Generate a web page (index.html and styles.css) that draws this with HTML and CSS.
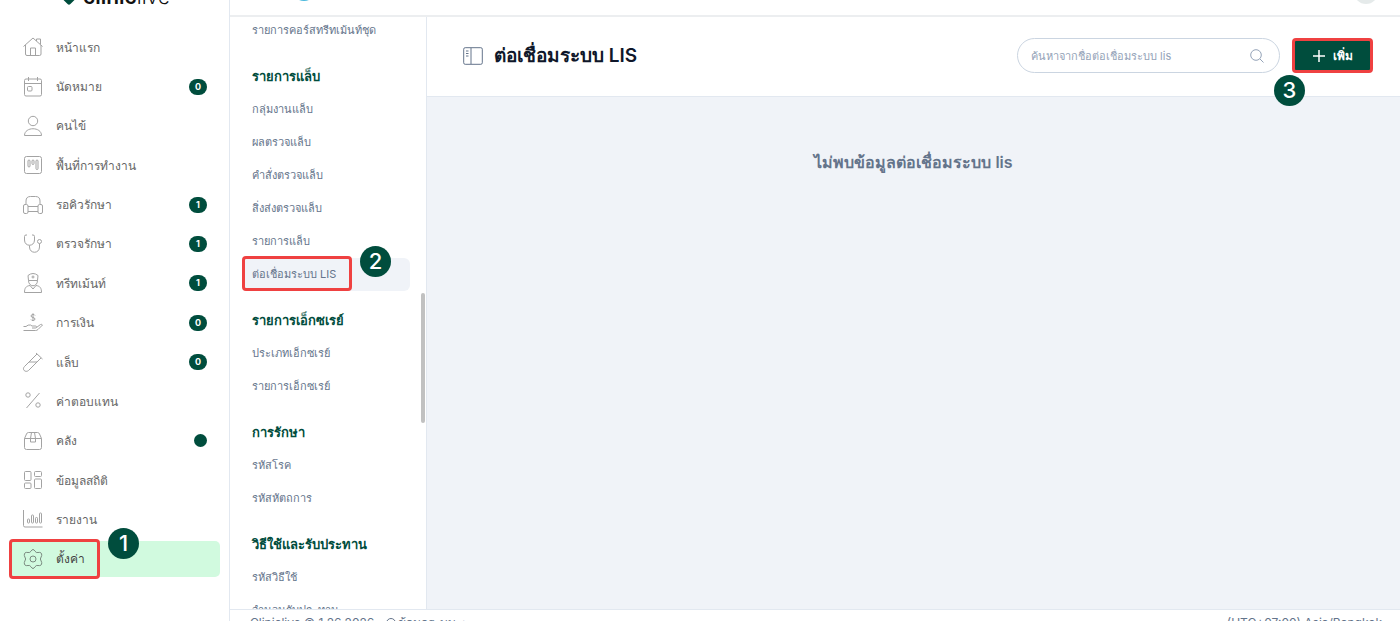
FILE: index.html
```
<!DOCTYPE html>
<html lang="th">
<head>
  <meta charset="UTF-8">
  <meta name="viewport" content="width=device-width, initial-scale=1.0">
  <title>Cliniclive - ต่อเชื่อมระบบ LIS</title>
  <link rel="stylesheet" href="styles.css">
</head>
<body>
  <div class="app">
    <aside class="sidebar">
      <div class="brand">
        <span class="brand-mark"></span>
        <span class="brand-name"><b>clinic</b>live</span>
      </div>
      <nav class="main-nav">
        <a href="#">
          <svg class="icon" viewBox="0 0 20 20"><path d="M.5 9.500 10 1l9.500 8.500M2.500 8v9q0 1.500 1.500 1.500h12.500q1.500 0 1.500-1.500V8M7.500 18.500V11h5v7.500M13.500 4V2h4v5.500"/></svg>
          <span>หน้าแรก</span>
        </a>
        <a href="#">
          <svg class="icon" viewBox="0 0 20 20"><rect x="1.500" y="2" width="17" height="17" rx="1.500"/><path d="M1.500 6.500h17M5.500 0v4M14.500 0v4"/><rect x="4.500" y="9.500" width="4.500" height="4.500" rx="1"/></svg>
          <span>นัดหมาย</span>
          <span class="count">0</span>
        </a>
        <a href="#">
          <svg class="icon" viewBox="0 0 20 20"><circle cx="10" cy="5" r="4.700"/><path d="M1.500 19.500c0-9 17-9 17 0z"/></svg>
          <span>คนไข้</span>
        </a>
        <a href="#">
          <svg class="icon" viewBox="0 0 20 20"><rect x="1.500" y="1.500" width="17" height="17" rx="2"/><rect x="5" y="5" width="2" height="7" rx="1"/><rect x="9" y="5" width="2" height="4.500" rx="1"/><rect x="13" y="5" width="2" height="9.500" rx="1"/></svg>
          <span>พื้นที่การทำงาน</span>
        </a>
        <a href="#">
          <svg class="icon" viewBox="0 0 20 20"><path d="M3 9V6q0-4.500 4.500-4.500h5Q17 1.500 17 6v3M5 11.500h10M5 16.500h10"/><rect x=".5" y="9.500" width="4.500" height="9" rx="1.500"/><rect x="15" y="9.500" width="4.500" height="9" rx="1.500"/></svg>
          <span>รอคิวรักษา</span>
          <span class="count">1</span>
        </a>
        <a href="#">
          <svg class="icon" viewBox="0 0 20 20"><path d="M4 1H3Q1.500 1 1.500 2.500V6c0 7 10 7 10 0V2.500Q11.500 1 10 1H9M6.500 11.500V13c0 7 10 7 10 0V9.500"/><circle cx="16.500" cy="7.500" r="2"/></svg>
          <span>ตรวจรักษา</span>
          <span class="count">1</span>
        </a>
        <a href="#">
          <svg class="icon" viewBox="0 0 20 20"><path d="M5.500 7.500 5 2.500q5-4 10 0l-.5 5zM10 2.500v3M8.500 4h3M5.500 7.500c0 7 9 7 9 0M7 12.500l3 3.500 3-3.500c4 .5 5.500 2.500 5.500 7h-17c0-4.500 1.500-6.500 5.500-7"/></svg>
          <span>ทรีทเม้นท์</span>
          <span class="count">1</span>
        </a>
        <a href="#">
          <svg class="icon" viewBox="0 0 20 20"><path d="M12 2.500C11.500 1 8 1 8 3s4 1 4 3-3.500 2-4 .5M10 .3v7.500M.5 13.500h2.500q2-2 4.500-1.500l1.500 1h3.500q1 0 1 1t-1 1H9M13.500 14.500l4-3q1.500-.5 2 .5L15 16.500q-1 1-2.500 1H.5"/></svg>
          <span>การเงิน</span>
          <span class="count">0</span>
        </a>
        <a href="#">
          <svg class="icon" viewBox="0 0 20 20"><path d="m13 1 6.500 6M14 2 1.500 14.500c-3 3 1 6.500 4 4L18 6M6 10h8"/></svg>
          <span>แล็บ</span>
          <span class="count">0</span>
        </a>
        <a href="#">
          <svg class="icon" viewBox="0 0 20 20"><path d="M16.500 2 3.500 17"/><circle cx="5" cy="4" r="2.200"/><circle cx="15" cy="14" r="2.200"/></svg>
          <span>ค่าตอบแทน</span>
        </a>
        <a href="#">
          <svg class="icon" viewBox="0 0 20 20"><path d="M1.500 7.500 3.500 3q.5-1.500 2-1.500h9q1.500 0 2 1.500l2 4.500v9q0 2-2 2h-13q-2 0-2-2v-9h17M8.500 1.500l-1 6V11h5V7.500l-1-6"/></svg>
          <span>คลัง</span>
          <span class="dot"></span>
        </a>
        <a href="#">
          <svg class="icon" viewBox="0 0 20 20"><rect x="1.500" y="1.500" width="6.500" height="9" rx="1"/><rect x="11.500" y="1.500" width="7" height="5" rx="1"/><rect x="1.500" y="13" width="6.500" height="5.500" rx="1"/><rect x="11.500" y="9" width="7" height="9.500" rx="1"/></svg>
          <span>ข้อมูลสถิติ</span>
        </a>
        <a href="#">
          <svg class="icon" viewBox="0 0 20 20"><path d="M.5 1v15.500q0 1.500 1.500 1.500h17.500"/><rect x="4.500" y="10" width="2" height="4" rx=".8"/><rect x="8.500" y="6" width="2" height="8" rx=".8"/><rect x="12.500" y="8.500" width="2" height="5.500" rx=".8"/><rect x="16.500" y="4" width="2" height="10" rx=".8"/></svg>
          <span>รายงาน</span>
        </a>
        <a href="#" class="active" aria-current="page">
          <svg class="icon" viewBox="0 0 20 20"><path d="M8 2.200Q10-1.200 12 2.200q1 1.800 3 1.300 4-.8 3.700 3Q16 10 18.700 13.500q.3 3.800-3.700 3-2-.5-3 1.300-2 3.400-4 0-1-1.800-3-1.300-4 .8-3.700-3Q4 10 1.300 6.500 1 2.700 5 3.500q2 .5 3-1.300z"/><circle cx="10" cy="10" r="3"/></svg>
          <span>ตั้งค่า</span>
          <span class="outline"></span>
          <span class="step step-nav">1</span>
        </a>
      </nav>
    </aside>

    <div class="page">
      <header class="topbar">
        <span class="clinic-logo"></span>
        <span class="avatar"></span>
      </header>

      <div class="workspace">
        <nav class="sub-nav">
          <section>
            <a href="#">รายการคอร์สทรีทเม้นท์ชุด</a>
          </section>
          <section>
            <h2>รายการแล็บ</h2>
            <a href="#">กลุ่มงานแล็บ</a>
            <a href="#">ผลตรวจแล็บ</a>
            <a href="#">คำสั่งตรวจแล็บ</a>
            <a href="#">สิ่งส่งตรวจแล็บ</a>
            <a href="#">รายการแล็บ</a>
            <a href="#" class="active" aria-current="page">ต่อเชื่อมระบบ LIS
              <span class="outline"></span>
              <span class="step step-sub">2</span>
            </a>
          </section>
          <section>
            <h2>รายการเอ็กซเรย์</h2>
            <a href="#">ประเภทเอ็กซเรย์</a>
            <a href="#">รายการเอ็กซเรย์</a>
          </section>
          <section>
            <h2>การรักษา</h2>
            <a href="#">รหัสโรค</a>
            <a href="#">รหัสหัตถการ</a>
          </section>
          <section>
            <h2>วิธีใช้และรับประทาน</h2>
            <a href="#">รหัสวิธีใช้</a>
            <a href="#">จำนวนรับประทาน</a>
          </section>
          <span class="scroll-thumb"></span>
        </nav>

        <main class="content">
          <div class="content-head">
            <svg class="panel-icon" viewBox="0 0 20 18"><rect x=".7" y=".7" width="18.600" height="16.600" rx="1.500"/><path d="M8 1v16M3 4h2.500M3 6.500h2.500M3 9h2.500"/></svg>
            <h1>ต่อเชื่อมระบบ LIS</h1>
            <form class="search">
              <input type="text" aria-label="ค้นหา" placeholder="ค้นหาจากชื่อต่อเชื่อมระบบ lis">
              <svg class="search-icon" viewBox="0 0 14 14"><circle cx="6" cy="6" r="5.300"/><path d="m10 10 3.500 3.500"/></svg>
            </form>
            <button type="button" class="add">
              <svg class="plus-icon" viewBox="0 0 12 12"><path d="M6 0v12M0 6h12"/></svg>
              <span>เพิ่ม</span>
              <span class="step step-add">3</span>
            </button>
          </div>
          <p class="empty">ไม่พบข้อมูลต่อเชื่อมระบบ lis</p>
        </main>
      </div>

      <footer class="footer">
        <span>Cliniclive © 1.26.2026</span>
        <a href="#"><span class="ring"></span>ข้อมูลระบบ +</a>
        <span class="timezone">(UTC+07:00) Asia/Bangkok</span>
      </footer>
    </div>
  </div>
</body>
</html>
```
FILE: styles.css
```
* {
  box-sizing: border-box;
}

body {
  margin: 0;
  font-family: Inter, "Noto Sans", sans-serif;
  font-size: 12px;
  color: #64748b;
  background-color: #fff;
}

a {
  color: inherit;
  text-decoration: none;
}

.app {
  display: flex;
  height: 100vh;
  overflow: hidden;
}

/* Left menu */
.sidebar {
  display: flex;
  flex-direction: column;
  flex: 0 0 230px;
  padding-bottom: 44px;
  border-right: 1px solid #e2e8f0;
}

.brand {
  display: flex;
  justify-content: center;
  align-items: flex-end;
  gap: 8px;
  height: 29px;
  padding: 0 0 20px 4px;
}

.brand-mark {
  width: 12px;
  height: 12px;
  margin-bottom: 6px;
  background-color: #004d3d;
  border-radius: 2px;
  transform: rotate(45deg);
}

.brand-name {
  font-size: 21px;
  line-height: 24px;
  color: #111;
  font-weight: 300;
}

.brand-name b {
  font-weight: 600;
}

.main-nav {
  display: flex;
  flex-direction: column;
  flex: 1;
  gap: 3px;
  padding: 0 9px;
}

.main-nav a {
  position: relative;
  display: flex;
  align-items: center;
  flex: 1;
  gap: 13px;
  padding: 0 13px 0 14px;
  border-radius: 5px;
  color: #666;
}

.main-nav .active {
  background-color: #d1fadf;
  color: #444;
}

.icon {
  flex: none;
  width: 20px;
  height: 20px;
  fill: none;
  stroke: #a3a3a3;
  stroke-width: 1;
  overflow: visible;
}

.active .icon {
  stroke: #7a8a80;
}

.count {
  min-width: 18px;
  margin-left: auto;
  padding: 0 6px;
  border-radius: 8px;
  background-color: #004d3d;
  color: #fff;
  font-size: 9px;
  font-weight: 700;
  line-height: 16px;
  text-align: center;
}

.dot {
  width: 13px;
  height: 13px;
  margin-left: auto;
  border-radius: 50%;
  background-color: #004d3d;
}

/* Guide marks */
.outline {
  position: absolute;
  top: -2px;
  bottom: -2px;
  left: 0;
  width: 91px;
  border: 3px solid #ef4141;
  border-radius: 4px;
}

.step {
  position: absolute;
  width: 31px;
  height: 31px;
  border-radius: 50%;
  background-color: #004d3d;
  color: #fff;
  font-family: Inter, sans-serif;
  font-size: 22px;
  font-weight: 500;
  line-height: 31px;
  text-align: center;
}

.step-nav {
  left: 99px;
  top: -13px;
}

.step-sub {
  left: 118px;
  top: -12px;
}

.step-add {
  left: -21px;
  top: 34px;
}

/* Right side */
.page {
  display: flex;
  flex-direction: column;
  flex: 1;
  min-width: 0;
}

.topbar {
  display: flex;
  justify-content: space-between;
  align-items: flex-start;
  flex: 0 0 17px;
  padding: 0 22px 0 62px;
  border-bottom: 2px solid #eceef0;
}

.clinic-logo,
.avatar {
  width: 24px;
  height: 24px;
  margin-top: -23px;
  border-radius: 50%;
  background-color: #4ab8dc;
}

.avatar {
  margin-top: -20px;
  background-color: #e5eaea;
}

.workspace {
  display: flex;
  flex: 1;
  min-height: 0;
}

.sub-nav {
  position: relative;
  flex: 0 0 197px;
  padding: 0 16px 0 12px;
  border-right: 1px solid #e2e8f0;
  font-size: 11px;
  overflow: hidden;
}

.sub-nav section {
  margin-bottom: 13px;
}

.sub-nav section:first-child {
  margin-top: -3px;
}

.sub-nav h2,
.sub-nav a {
  display: block;
  position: relative;
  margin: 0;
  padding: 0 10px;
  line-height: 33px;
  white-space: nowrap;
}

.sub-nav h2 {
  font-size: 13px;
  font-weight: 700;
  color: #004d3d;
}

.sub-nav .active {
  border-radius: 6px;
  background-color: #f0f3f8;
}

.sub-nav .outline {
  bottom: 0;
  width: 110px;
}

.scroll-thumb {
  position: absolute;
  top: 276px;
  right: 1px;
  width: 4px;
  height: 130px;
  border-radius: 2px;
  background-color: #c1c1c1;
}

.content {
  flex: 1;
  background-color: #f0f3f8;
}

.content-head {
  display: flex;
  align-items: center;
  height: 80px;
  padding: 0 27px 2px 36px;
  border-bottom: 1px solid #e2e8f0;
  background-color: #fff;
}

.panel-icon {
  width: 20px;
  height: 18px;
  fill: none;
  stroke: #64748b;
}

h1 {
  margin: 0 auto 0 11px;
  font-size: 19px;
  font-weight: 600;
  line-height: 30px;
  color: #0f172a;
}

.search {
  display: flex;
  align-items: center;
  width: 263px;
  height: 35px;
  margin-right: 12px;
  padding: 0 15px 0 13px;
  border: 1px solid #cbd5e1;
  border-radius: 18px;
  font-size: 11px;
}

.search input {
  flex: 1;
  min-width: 0;
  padding: 0;
  border: 0;
  outline: 0;
  background: none;
  font: inherit;
}

.search input::placeholder {
  color: #94a3b8;
}

.search-icon {
  width: 14px;
  height: 14px;
  fill: none;
  stroke: #94a3b8;
}

.add {
  position: relative;
  display: flex;
  align-items: center;
  justify-content: center;
  gap: 8px;
  width: 81px;
  height: 35px;
  padding: 0;
  border: 3px solid #ef4141;
  border-radius: 4px;
  background-color: #004d3d;
  color: #fff;
  font: inherit;
  font-weight: 600;
}

.plus-icon {
  width: 12px;
  height: 12px;
  fill: none;
  stroke: #fff;
  stroke-width: 1.5;
}

.empty {
  margin: 0;
  padding-top: 50px;
  font-size: 16px;
  font-weight: 600;
  line-height: 30px;
  text-align: center;
}

.footer {
  display: flex;
  gap: 12px;
  flex: 0 0 12px;
  padding: 5px 18px 0 20px;
  border-top: 1px solid #e2e8f0;
  background-color: #fff;
  line-height: 16px;
  overflow: hidden;
}

.ring {
  display: inline-block;
  width: 10px;
  height: 10px;
  margin-right: 2px;
  border: 1px solid #64748b;
  border-radius: 50%;
  vertical-align: -1px;
}

.timezone {
  margin-left: auto;
}
```
